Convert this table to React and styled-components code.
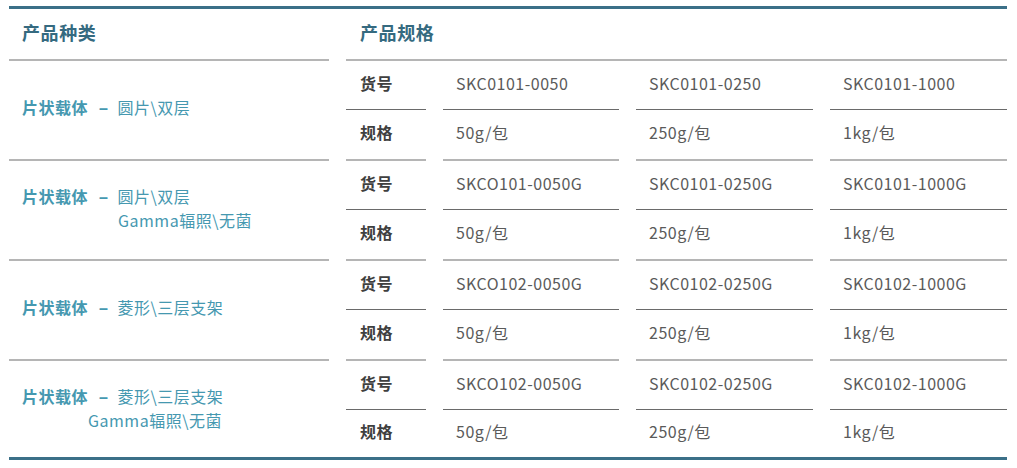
import React from 'react';
import styled, { createGlobalStyle } from 'styled-components';

const GlobalStyle = createGlobalStyle`
    * { box-sizing: border-box; }
    body {
        margin: 0;
        background: #fff;
        font-family: "Noto Sans CJK SC", "Noto Sans", sans-serif;
    }
`

const Page = styled.div`
    padding: 6px 0 0 9px;
`

const Table = styled.div`
    display: flex;
    width: 998px;
    border-top: 3px solid #3b7088;
    border-bottom: 3px solid #3b7088;
`

const LeftCol = styled.div`
    width: 320px;
    display: flex;
    flex-direction: column;
`

const HeaderCell = styled.div`
    height: 52px;
    display: flex;
    align-items: center;
    padding: 0 0 4px ${props => props.pad}px;
    border-bottom: 2px solid #b5b5b5;
    font-size: 18px;
    font-weight: 700;
    letter-spacing: 0.6px;
    color: #356a80;
    grid-column: 1 / -1;
`

const Group = styled.div`
    height: ${props => props.last ? 96 : 100}px;
    display: flex;
    flex-direction: column;
    justify-content: center;
    padding: 0 0 ${props => props.last ? 2 : 4}px 13px;
    border-bottom: ${props => props.last ? 'none' : '2px solid #b5b5b5'};
    color: #4598b0;
    font-size: 16px;
    letter-spacing: 0.5px;
    line-height: 23px;
`

const Line = styled.div`
    padding-left: ${props => props.indent || 0}px;
    white-space: nowrap;
`

const Kind = styled.span`
    font-weight: 700;
`

const Dash = styled.span`
    font-family: "Liberation Sans", sans-serif;
    font-weight: 700;
    margin: 0 9px 0 11px;
`

const RightCol = styled.div`
    margin-left: 17px;
    flex: 1;
    display: grid;
    grid-template-columns: 80px 176px 177px 177px;
    column-gap: 17px;
    align-content: start;
`

const heights = { code: 49, spec: 51, last: 47 };
const borders = { code: '1px solid #6a6a6a', spec: '2px solid #b5b5b5', last: 'none' };

const Cell = styled.div`
    height: ${props => heights[props.kind]}px;
    border-bottom: ${props => borders[props.kind]};
    display: flex;
    align-items: center;
    padding: 0 0 ${props => props.kind === 'code' ? 5 : 6}px 13px;
    font-size: 16px;
    letter-spacing: 0.5px;
    color: #5a5a5a;
    white-space: nowrap;
`

const LabelCell = styled(Cell)`
    padding-left: 14px;
    font-weight: 700;
    color: #3f3f3f;
`

const groups = [
    { kind: '片状载体', name: '圆片\\双层', codes: ['SKC0101-0050', 'SKC0101-0250', 'SKC0101-1000'] },
    { kind: '片状载体', name: '圆片\\双层', sub: 'Gamma辐照\\无菌', indent: 96, codes: ['SKCO101-0050G', 'SKC0101-0250G', 'SKC0101-1000G'] },
    { kind: '片状载体', name: '菱形\\三层支架', codes: ['SKCO102-0050G', 'SKC0102-0250G', 'SKC0102-1000G'] },
    { kind: '片状载体', name: '菱形\\三层支架', sub: 'Gamma辐照\\无菌', indent: 66, codes: ['SKCO102-0050G', 'SKC0102-0250G', 'SKC0102-1000G'] },
];

const specs = ['50g/包', '250g/包', '1kg/包'];

const App = () => {
    return (
        <Page>
            <GlobalStyle />
            <Table>
                <LeftCol>
                    <HeaderCell pad={13}>产品种类</HeaderCell>
                    {groups.map((g, i) => (
                        <Group key={i} last={i === groups.length - 1}>
                            <Line>
                                <Kind>{g.kind}</Kind>
                                <Dash>–</Dash>
                                {g.name}
                            </Line>
                            {g.sub && <Line indent={g.indent}>{g.sub}</Line>}
                        </Group>
                    ))}
                </LeftCol>
                <RightCol>
                    <HeaderCell pad={14}>产品规格</HeaderCell>
                    {groups.map((g, i) => {
                        const specKind = i === groups.length - 1 ? 'last' : 'spec';
                        return (
                            <React.Fragment key={i}>
                                <LabelCell kind="code">货号</LabelCell>
                                {g.codes.map(c => <Cell key={c} kind="code">{c}</Cell>)}
                                <LabelCell kind={specKind}>规格</LabelCell>
                                {specs.map(s => <Cell key={s} kind={specKind}>{s}</Cell>)}
                            </React.Fragment>
                        );
                    })}
                </RightCol>
            </Table>
        </Page>
    );
}

export default App;
